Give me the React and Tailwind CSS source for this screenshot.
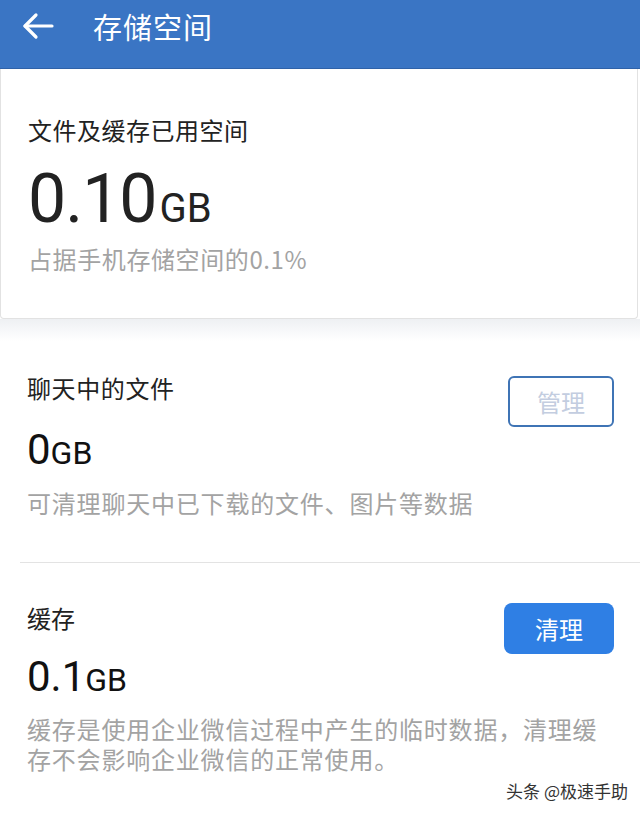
export default function App() {
  return (
    <div
      className="w-[640px] h-[813px] overflow-hidden bg-white relative"
      style={{ fontFamily: '"Noto Sans CJK SC", sans-serif' }}
    >
      {/* header */}
      <div className="h-[69px] bg-[#3a75c4] flex items-start pt-[6px] border-b border-[#2f62a8]">
        <div className="w-[93px] h-[40px] flex items-center pl-[22px]">
          <svg width="32" height="28" viewBox="0 0 32 28" fill="none" stroke="white" strokeWidth="3.2" strokeLinecap="round" strokeLinejoin="round">
            <path d="M30 14H3" />
            <path d="M14 3L3 14l11 11" />
          </svg>
        </div>
        <div className="text-white text-[29px] leading-[40px] tracking-[1px]">存储空间</div>
      </div>

      {/* summary card */}
      <div className="h-[250px] border border-t-0 border-[#e2e2e2] rounded-b-[4px] mr-[2px] px-[27px] pt-[46px]">
        <div className="text-[24px] leading-[30px] tracking-[0.5px] text-[#222]">文件及缓存已用空间</div>
        <div className="flex items-baseline mt-[19px] text-[#222]" style={{ fontFamily: 'Roboto, "Noto Sans CJK SC", sans-serif' }}>
          <span className="text-[68px] leading-[70px] tracking-[-1px]">0.10</span>
          <span className="text-[40px] leading-[40px] ml-[3px]">GB</span>
        </div>
        <div className="text-[24px] leading-[30px] tracking-[0.6px] text-[#a3a3a3] mt-[10px]">占据手机存储空间的0.1%</div>
      </div>
      <div className="h-[22px] bg-gradient-to-b from-[#eef0f3] to-white" />

      {/* chat files */}
      <div className="px-[27px] pt-[30px] flex justify-between">
        <div>
          <div className="text-[24px] leading-[34px] tracking-[0.6px] text-[#222]">聊天中的文件</div>
          <div className="flex items-baseline mt-[20px] text-[#111]" style={{ fontFamily: 'Roboto, "Noto Sans CJK SC", sans-serif' }}>
            <span className="text-[42px] leading-[50px]">0</span>
            <span className="text-[32px] leading-[34px]">GB</span>
          </div>
          <div className="text-[24px] leading-[34px] tracking-[0.8px] text-[#a3a3a3] mt-[11px]">可清理聊天中已下载的文件、图片等数据</div>
        </div>
        <div className="mt-[5px] mr-[-1px] w-[106px] h-[51px] border-2 border-[#3f74b5] rounded-[6px] flex items-center justify-center text-[24px] text-[#c3cde0]">
          管理
        </div>
      </div>

      <div className="ml-[20px] mt-[42px] h-[1px] bg-[#e3e3e3]" />

      {/* cache */}
      <div className="px-[27px] pt-[38px] flex justify-between">
        <div>
          <div className="text-[24px] leading-[34px] text-[#222]">缓存</div>
          <div className="flex items-baseline mt-[17px] text-[#111]" style={{ fontFamily: 'Roboto, "Noto Sans CJK SC", sans-serif' }}>
            <span className="text-[42px] leading-[50px]">0.1</span>
            <span className="text-[32px] leading-[34px]">GB</span>
          </div>
        </div>
        <div className="mt-[2px] mr-[-1px] w-[110px] h-[51px] bg-[#2f7fe4] rounded-[8px] flex items-center justify-center text-[24px] text-white">
          清理
        </div>
      </div>
      <div className="px-[27px] mt-[12px] text-[24px] leading-[30px] tracking-[0.8px] text-[#a3a3a3]">
        缓存是使用企业微信过程中产生的临时数据，清理缓存不会影响企业微信的正常使用。
      </div>

      {/* watermark */}
      <div className="absolute right-[12px] bottom-[12px] text-[17px] leading-[20px] text-[#333]">头条 @极速手助</div>
    </div>
  )
}
